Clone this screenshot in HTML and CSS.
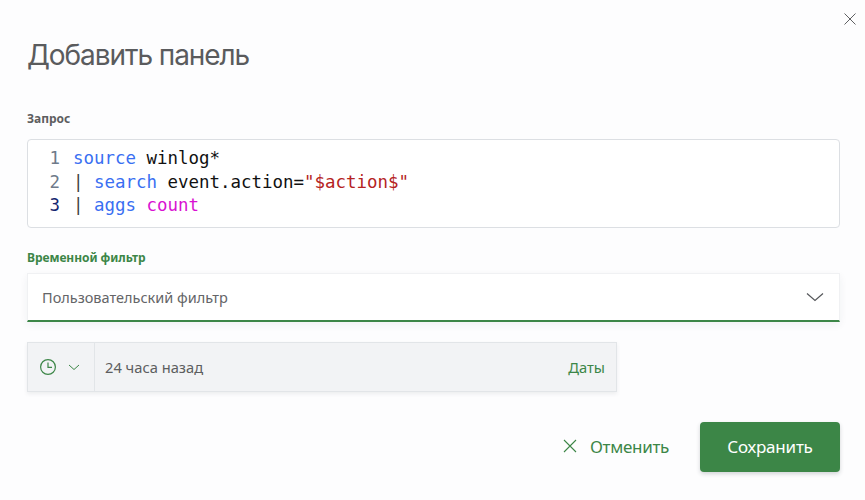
FILE: index.html
```html
<!DOCTYPE html>
<html lang="ru">
<head>
<meta charset="utf-8">
<title>Добавить панель</title>
<link rel="stylesheet" href="styles.css">
</head>
<body>
<main class="dialog">
  <button class="close" aria-label="Закрыть">
    <svg width="14" height="14" viewBox="0 0 14 14"><path d="M1.5 1.5l11 11M12.5 1.5l-11 11" fill="none" stroke="#5f6062" stroke-width="1"/></svg>
  </button>
  <h1 class="title">Добавить панель</h1>
  <div class="label label-query">Запрос</div>
  <div class="editor">
    <div class="line"><span class="num">1</span><code class="code"><span class="kw">source</span> winlog*</code></div>
    <div class="line"><span class="num">2</span><code class="code"><span class="pipe">|</span> <span class="kw">search</span> event.action=<span class="str">"$action$"</span></code></div>
    <div class="line"><span class="num num-active">3</span><code class="code"><span class="pipe">|</span> <span class="kw">aggs</span> <span class="fn">count</span></code></div>
  </div>
  <div class="label label-active">Временной фильтр</div>
  <div class="select">
    <span>Пользовательский фильтр</span>
    <svg width="18" height="10" viewBox="0 0 18 10"><path d="M1 1.5l8 7 8-7" fill="none" stroke="#55575a" stroke-width="1.2"/></svg>
  </div>
  <div class="range">
    <div class="range-toggle">
      <svg width="18" height="18" viewBox="0 0 18 18"><circle cx="9" cy="9" r="7.4" fill="none" stroke="#3c8647" stroke-width="1.2"/><path d="M9 4.5V9.4H13" fill="none" stroke="#3c8647" stroke-width="1.2"/></svg>
      <svg width="12" height="7" viewBox="0 0 12 7"><path d="M1 1l5 4.5L11 1" fill="none" stroke="#3c8647" stroke-width="1"/></svg>
    </div>
    <div class="range-value">24 часа назад</div>
    <div class="range-link">Даты</div>
  </div>
  <div class="actions">
    <button class="cancel">
      <svg width="14" height="14" viewBox="0 0 14 14"><path d="M1 1l12 12M13 1L1 13" fill="none" stroke="#3c8647" stroke-width="1.1"/></svg>
      Отменить
    </button>
    <button class="save">Сохранить</button>
  </div>
</main>
</body>
</html>
```
FILE: styles.css
```css
* { box-sizing: border-box; }
html, body { margin: 0; height: 100%; }
body { background: #fdfdfe; font-family: "Noto Sans", sans-serif; color: #5d5e60; overflow: hidden; }
.dialog { position: relative; width: 865px; height: 500px; padding: 36px 25px 0 27px; display: flex; flex-direction: column; }
.close { position: absolute; top: 12px; right: 8px; width: 14px; height: 14px; padding: 0; border: 0; background: none; display: flex; }
.title { margin: 0; font-family: "Inter", sans-serif; font-weight: 400; font-size: 28px; line-height: 38px; letter-spacing: -1.07px; color: #5a5b5d; }
.label { font-size: 12px; line-height: 16px; font-weight: 700; color: #5d5e60; letter-spacing: -0.05px; }
.label-query { margin-top: 37px; }
.label-active { margin-top: 22px; color: #3c8647; }
.editor { margin-top: 12px; height: 89px; border: 1px solid #dcdfe3; border-radius: 4px; background: #fff; padding: 7px 0 0; font-family: "DejaVu Sans Mono", monospace; font-size: 17.44px; line-height: 23.5px; color: #111; }
.line { display: flex; white-space: pre; }
.code { font: inherit; }
.num { width: 32px; text-align: right; margin-right: 13px; color: #6e7a8a; }
.num-active { color: #14266f; }
.kw { color: #3a6ff2; }
.pipe { color: #444; }
.str { color: #b5231f; }
.fn { color: #d911d2; }
.select { margin-top: 7px; height: 49px; padding: 0 15px 0 14px; display: flex; align-items: center; justify-content: space-between; background: #fff; border: 1px solid #f0f1f3; border-bottom: 2px solid #3c8647; box-shadow: 0 3px 8px rgba(40,50,60,.06); font-size: 14.5px; color: #646567; }
.range { margin-top: 20px; width: 590px; height: 50px; display: flex; align-items: center; background: #f2f3f5; border: 1px solid #e2e5e8; box-shadow: 0 2px 4px rgba(40,50,60,.08); font-size: 14.7px; }
.range-toggle { width: 67px; height: 100%; flex: none; display: flex; align-items: center; padding-left: 11px; gap: 11px; border-right: 1px solid #e2e5e8; }
.range-value { flex: 1; padding-left: 10px; color: #5d5e60; }
.range-link { padding-right: 11px; color: #3c8647; }
.actions { margin-top: 30px; display: flex; justify-content: flex-end; align-items: center; }
.cancel { display: flex; align-items: center; gap: 13px; margin-right: 31px; padding: 0 0 2px; border: 0; background: none; font: inherit; font-size: 17px; letter-spacing: -0.3px; color: #3c8647; }
.save { width: 140px; height: 50px; padding: 0 0 2px; border: 0; border-radius: 4px; background: #3c8647; color: #fff; font: inherit; font-size: 17px; letter-spacing: -0.22px; box-shadow: 0 2px 4px rgba(40,50,60,.2); }
```
